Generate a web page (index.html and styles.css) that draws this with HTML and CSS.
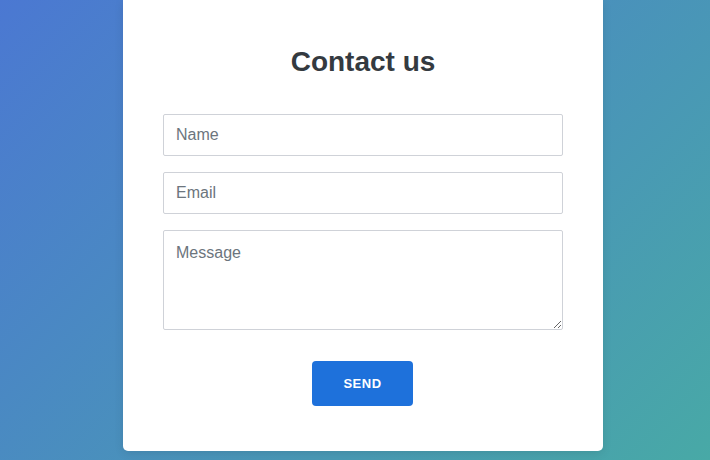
FILE: index.html
```html
<!DOCTYPE html>
<html lang="en">
<head>
    <meta charset="UTF-8">
    <meta name="viewport" content="width=device-width, initial-scale=1.0">
    <title>Contact us</title>
    <link rel="stylesheet" href="styles.css">
</head>
<body>
    <div class="card">
        <h2>Contact us</h2>
        <form class="contact-form">
            <input type="text" placeholder="Name">
            <input type="email" placeholder="Email">
            <textarea placeholder="Message"></textarea>
            <button type="button">SEND</button>
        </form>
    </div>
</body>
</html>
```

FILE: styles.css
```css
html, body {
    height: 100%;
}
body {
    margin: 0;
    padding-left: 16px;
    box-sizing: border-box;
    font-family: "Liberation Sans", Arial, sans-serif;
    background: linear-gradient(135deg, #4b78d2, #48a9a6);
    display: flex;
    justify-content: center;
    align-items: flex-start;
}
.card {
    width: 480px;
    box-sizing: border-box;
    background: #fff;
    border-radius: 0 0 5px 5px;
    padding: 46px 40px 45px;
    box-shadow: 0 2px 10px rgba(0, 0, 0, 0.1);
}
h2 {
    margin: 0 0 36px;
    text-align: center;
    font-size: 28px;
    font-weight: bold;
    color: #343a40;
}
.contact-form {
    display: flex;
    flex-direction: column;
    gap: 16px;
}
input, textarea {
    box-sizing: border-box;
    width: 100%;
    font-family: inherit;
    font-size: 16px;
    color: #343a40;
    border: 1px solid #cfd2d8;
    border-radius: 2px;
    padding: 0 12px;
}
input {
    height: 42px;
}
textarea {
    height: 100px;
    padding-top: 13px;
    resize: vertical;
}
input::placeholder, textarea::placeholder {
    color: #6c757d;
}
button {
    align-self: center;
    margin: 15px 1px 0 0;
    width: 101px;
    height: 45px;
    border: none;
    border-radius: 4px;
    background: #1e71db;
    color: #fff;
    font-family: inherit;
    font-size: 13px;
    font-weight: bold;
    letter-spacing: 0.5px;
    cursor: pointer;
}
```
